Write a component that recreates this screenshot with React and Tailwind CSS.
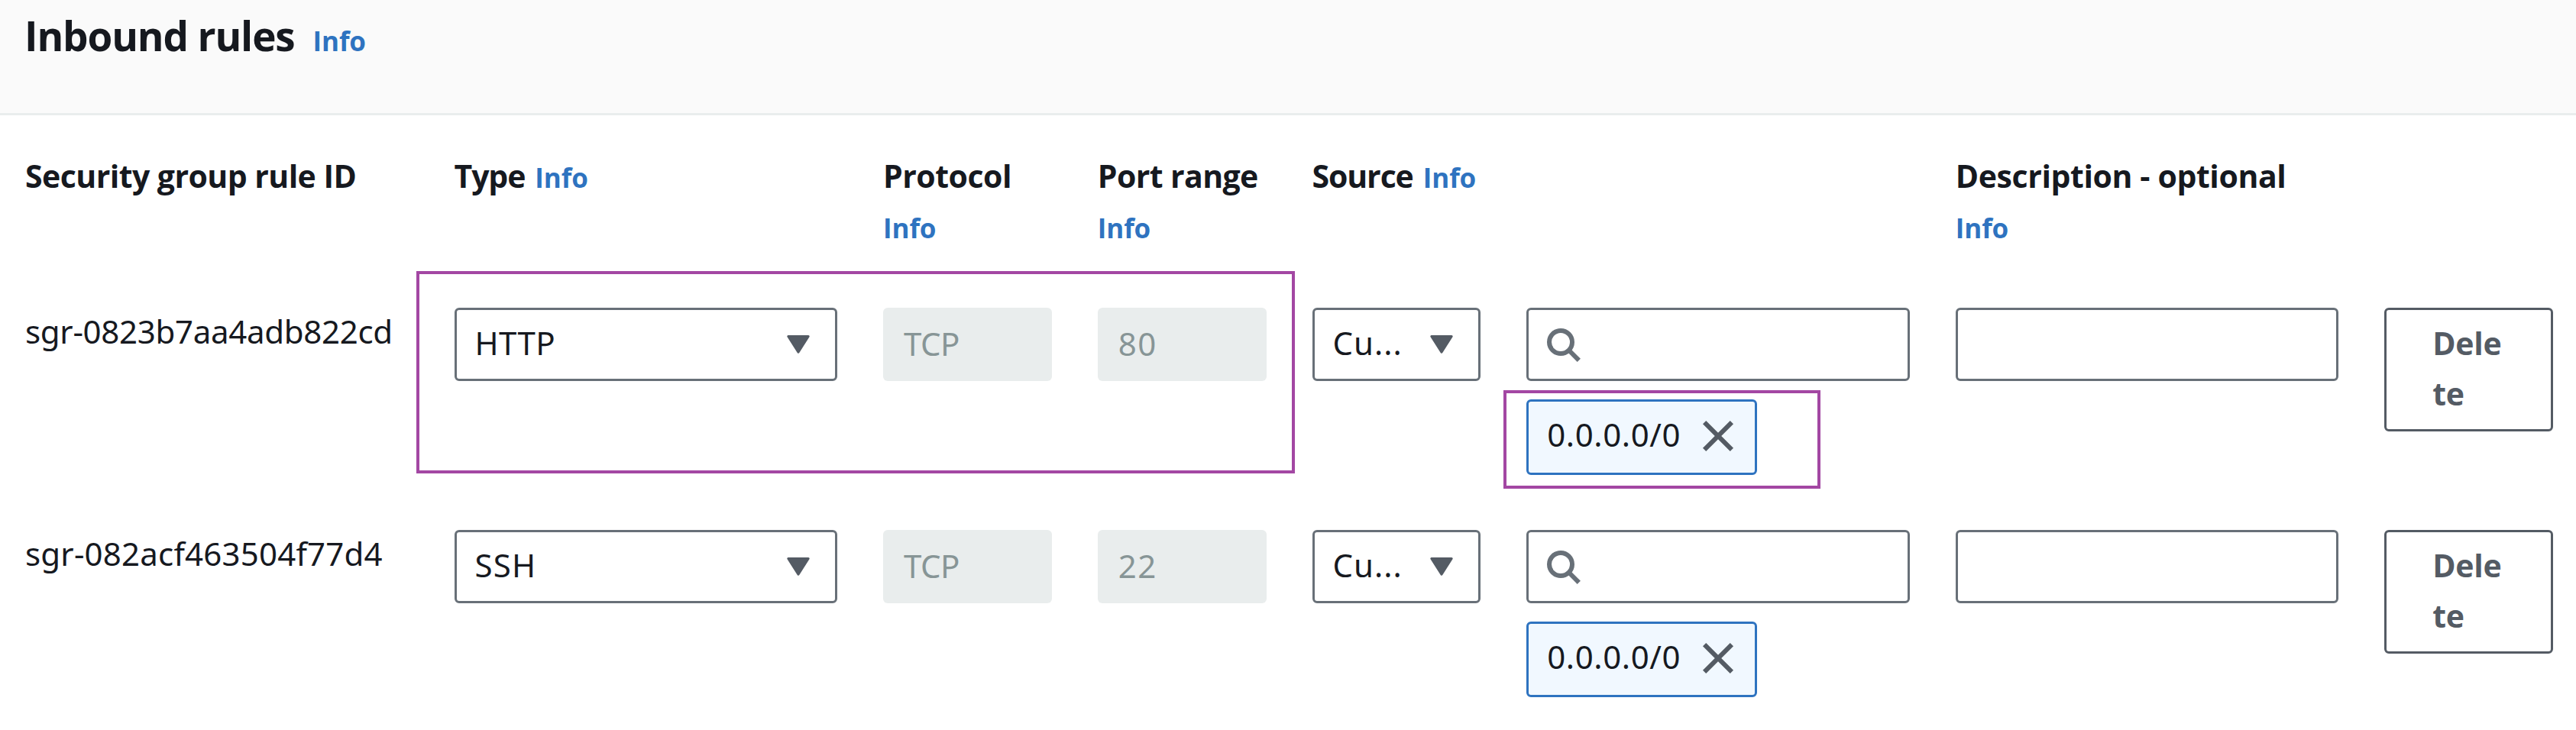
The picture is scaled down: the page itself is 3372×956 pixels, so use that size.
import React from "react";

const RULES = [
  { id: "sgr-0823b7aa4adb822cd", idClass: "tracking-[-0.3px]", type: "HTTP", typeClass: "tracking-[0.4px]", port: "80", cidr: "0.0.0.0/0", marked: true },
  { id: "sgr-082acf463504f77d4", idClass: "tracking-[0.2px]", type: "SSH", typeClass: "tracking-[1.2px]", port: "22", cidr: "0.0.0.0/0", marked: false },
];

function Info({ className = "" }) {
  return (
    <a className={`text-[35px] leading-none font-bold tracking-[-0.1px] text-[#2e73c0] ${className}`}>Info</a>
  );
}

function Caret() {
  return (
    <svg className="mt-[11px] size-12 shrink-0" viewBox="0 0 48 48">
      <path d="M10.8 13.4H37.2L24 34.2Z" fill="#545b64" stroke="#545b64" strokeWidth="3" strokeLinejoin="round" />
    </svg>
  );
}

function Select({ children, className, textClass }) {
  return (
    <div className={`flex h-24 items-start justify-between rounded-[6px] border-3 border-[#687078] bg-white px-6 pt-[10px] ${className}`}>
      <span className={textClass}>{children}</span>
      <Caret />
    </div>
  );
}

function DisabledInput({ children, textClass }) {
  return (
    <div className={`h-24 rounded-[6px] bg-[#e9eded] pt-[14px] pl-[27px] text-[#879596] ${textClass}`}>{children}</div>
  );
}

function Rule({ rule }) {
  return (
    <div className="relative grid h-[291px] grid-cols-12 items-start gap-x-[60px]">
      <div className={`col-span-2 -mt-[2px] whitespace-nowrap ${rule.idClass}`}>{rule.id}</div>
      <Select className="col-span-2" textClass={rule.typeClass}>{rule.type}</Select>
      <DisabledInput textClass="tracking-[-0.5px]">TCP</DisabledInput>
      <DisabledInput textClass="tracking-[1.5px]">{rule.port}</DisabledInput>
      <Select textClass="tracking-[1px]">Cu...</Select>
      <div className="col-span-2 flex flex-col items-start gap-6">
        <div className="flex h-24 w-full items-center rounded-[6px] border-3 border-[#687078] pl-[21px]">
          <svg className="size-12" viewBox="0 0 48 48" fill="none" stroke="#687078" strokeWidth="6">
            <circle cx="21" cy="21" r="15" />
            <path d="M31 31L44.8 44.8" />
          </svg>
        </div>
        <div className="flex h-[99px] w-[302px] items-start justify-between rounded-[6px] border-3 border-[#2e73c0] bg-[#f1f8ff] pt-[10px] pr-[24px] pl-[24px]">
          <span className="tracking-[0.6px]">{rule.cidr}</span>
          <svg className="mt-[11px] size-12" viewBox="0 0 48 48" stroke="#545b64" strokeWidth="6">
            <path d="M6.1 6.1L41.9 41.9M41.9 6.1L6.1 41.9" />
          </svg>
        </div>
      </div>
      <div className="col-span-2 h-24 rounded-[6px] border-3 border-[#687078]" />
      <button className="h-[162px] rounded-[6px] border-3 border-[#545b64] pt-[10px] pr-[57px] pb-[14px] pl-[60px] text-left font-['Open_Sans',sans-serif] text-[41px] leading-[66px] font-bold tracking-[-0.3px] break-all text-[#545b64]">
        Delete
      </button>
      {rule.marked && (
        <>
          <div className="absolute top-[-48px] left-[512px] h-[265px] w-[1150px] border-4 border-[#a347a3]" />
          <div className="absolute top-[108px] left-[1935px] h-[129px] w-[415px] border-4 border-[#a347a3]" />
        </>
      )}
    </div>
  );
}

export default function App() {
  return (
    <div className="h-[956px] w-[3372px] overflow-hidden bg-white font-['Noto_Sans',sans-serif] text-[42px] leading-[66px] text-[#16191f]">
      <header className="h-[151px] border-b-3 border-[#e9eded] bg-[#fafafa] pt-[14px] pl-8 font-['Open_Sans',sans-serif]">
        <h2 className="text-[53px] font-bold tracking-[-1.15px]">
          Inbound rules<Info className="ml-[24px]" />
        </h2>
      </header>
      <div className="pt-[46px] pr-[30px] pl-[33px]">
        <div className="mb-[74px] grid h-[132px] grid-cols-12 gap-x-[60px] font-['Open_Sans',sans-serif] text-[41px] font-bold whitespace-nowrap">
          <div className="col-span-2 tracking-[-0.55px]">Security group rule ID</div>
          <div className="col-span-2 tracking-[-1.1px]">Type<Info className="ml-[13px]" /></div>
          <div className="tracking-[-0.5px]">Protocol<br /><Info /></div>
          <div className="tracking-[-0.6px]">Port range<br /><Info /></div>
          <div className="col-span-3 tracking-[-1.1px]">Source<Info className="ml-[13px]" /></div>
          <div className="col-span-2 tracking-[-0.4px]">Description - optional<br /><Info /></div>
        </div>
        {RULES.map((rule) => (
          <Rule key={rule.id} rule={rule} />
        ))}
      </div>
    </div>
  );
}
